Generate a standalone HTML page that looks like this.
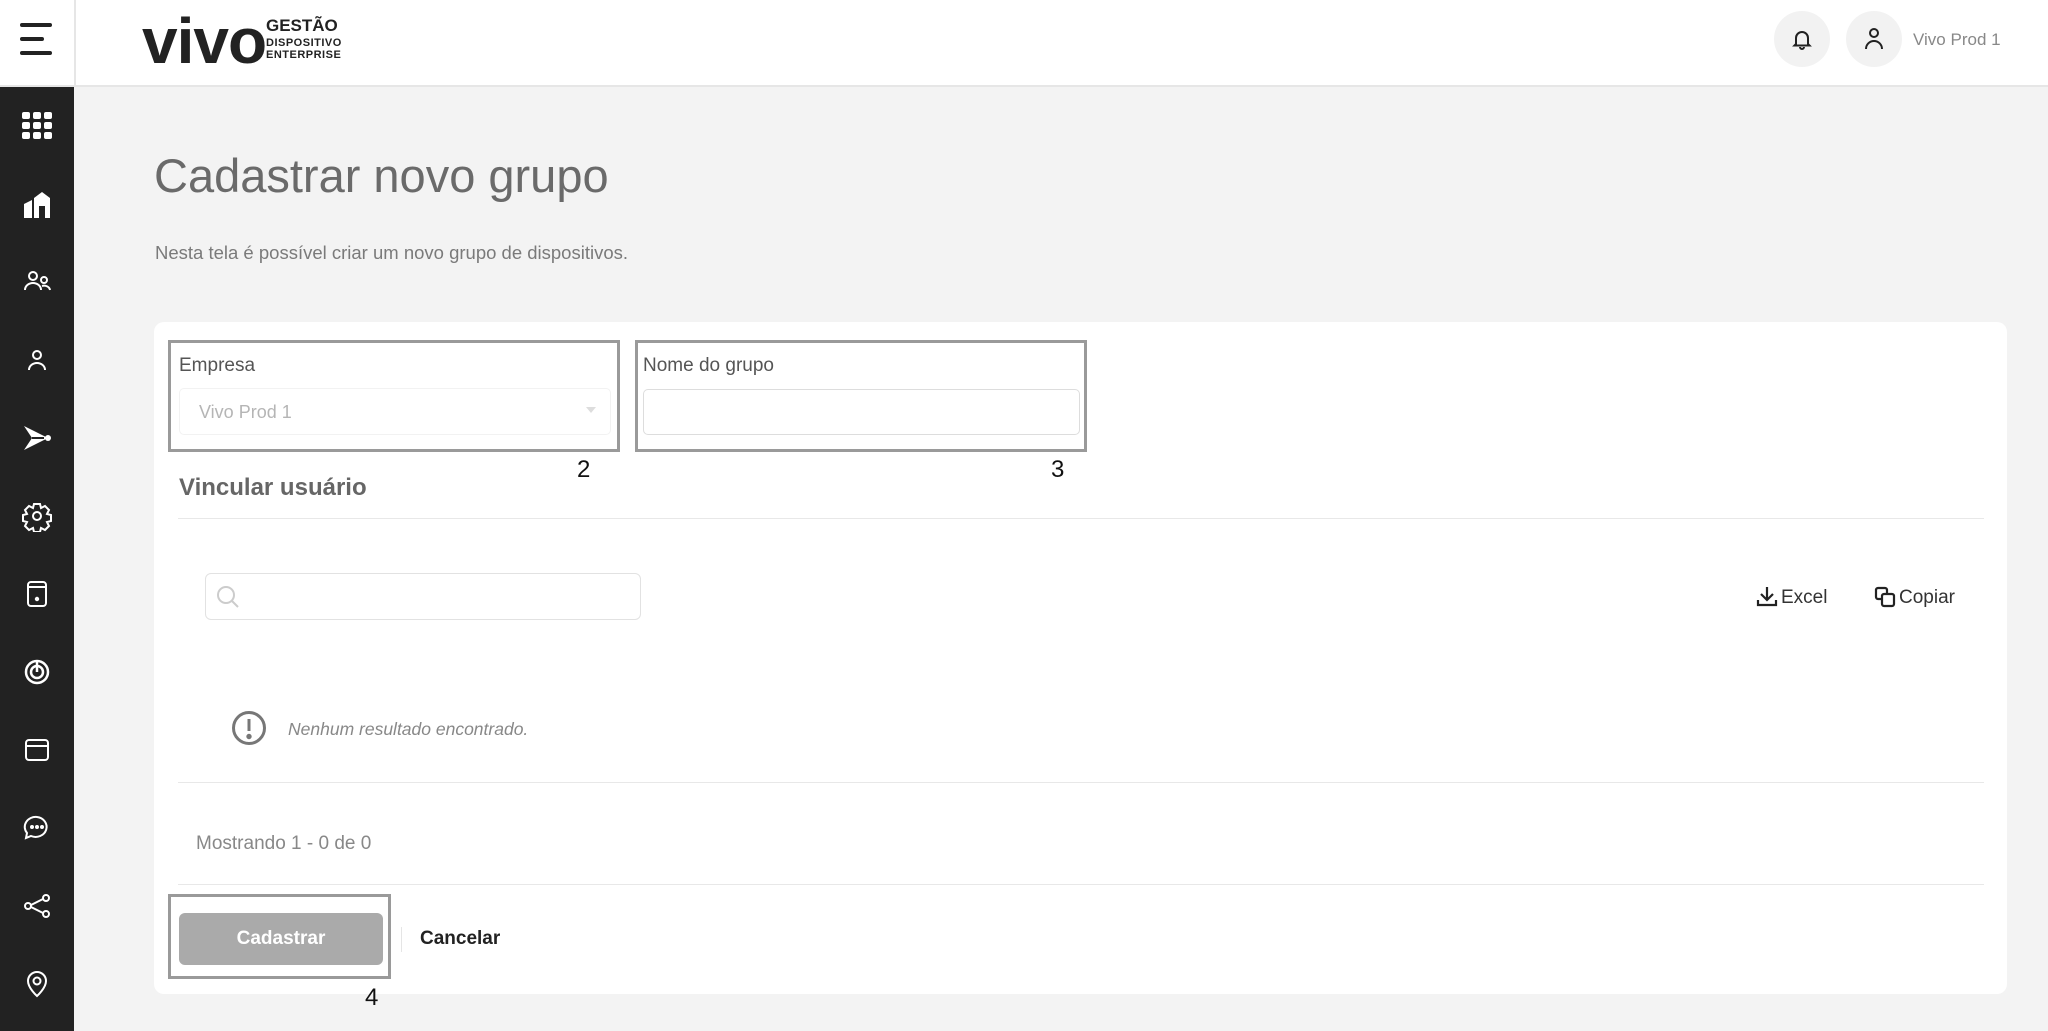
<!DOCTYPE html>
<html><head><meta charset="utf-8"><style>
*{margin:0;padding:0;box-sizing:border-box}
body{width:2048px;height:1031px;background:#f3f3f3;font-family:"Liberation Sans",sans-serif;position:relative;overflow:hidden;color:#444}
.a{position:absolute}
.hdr{left:0;top:0;width:2048px;height:87px;background:#fff;border-bottom:2px solid #e6e6e6}
.side{left:0;top:87px;width:74px;height:944px;background:#222}
.ic{position:absolute;left:21px;width:32px;height:32px}
.card{left:154px;top:322px;width:1853px;height:672px;background:#fff;border-radius:10px}
.box{border:3px solid #9a9a9a}
.line{height:1px;background:#e8e8e8;left:178px;width:1806px}
</style></head><body>
<div class="a hdr"></div>
<div class="a" style="left:74px;top:0;width:2px;height:87px;background:#e6e6e6"></div>
<div class="a" style="left:20px;top:23px;width:32px;height:4px;background:#222;border-radius:2px"></div>
<div class="a" style="left:20px;top:37px;width:24px;height:4px;background:#222;border-radius:2px"></div>
<div class="a" style="left:20px;top:51px;width:32px;height:4px;background:#222;border-radius:2px"></div>
<div class="a" style="left:142px;top:4px;font-size:64px;font-weight:bold;color:#222;letter-spacing:-1px">vivo</div>
<div class="a" style="left:266px;top:18px;font-size:17px;font-weight:bold;color:#222;line-height:16px">GESTÃO</div>
<div class="a" style="left:266px;top:37px;font-size:11px;font-weight:bold;color:#222;line-height:12px;letter-spacing:.5px">DISPOSITIVO<br>ENTERPRISE</div>
<div class="a" style="left:1774px;top:11px;width:56px;height:56px;border-radius:50%;background:#f2f2f2"></div>
<svg class="a" style="left:1790px;top:27px" width="24" height="24" viewBox="0 0 24 24" fill="none" stroke="#222" stroke-width="2"><path d="M6 17V11a6 6 0 0 1 12 0v6l1.5 1.5h-15z M10 20a2 2 0 0 0 4 0"/></svg>
<div class="a" style="left:1846px;top:11px;width:56px;height:56px;border-radius:50%;background:#f2f2f2"></div>
<svg class="a" style="left:1862px;top:26px" width="24" height="26" viewBox="0 0 24 26" fill="none" stroke="#222" stroke-width="2"><circle cx="12" cy="7" r="4"/><path d="M4 23a8 8 0 0 1 16 0"/></svg>
<div class="a" style="left:1913px;top:30px;font-size:17px;color:#888">Vivo Prod 1</div>

<div class="a side"></div>
<svg class="a" style="left:21px;top:111px" width="32" height="30" viewBox="0 0 32 30" fill="#fff"><rect x="1" y="1" width="8" height="7" rx="2"/><rect x="12" y="1" width="8" height="7" rx="2"/><rect x="23" y="1" width="8" height="7" rx="2"/><rect x="1" y="11" width="8" height="7" rx="2"/><rect x="12" y="11" width="8" height="7" rx="2"/><rect x="23" y="11" width="8" height="7" rx="2"/><rect x="1" y="21" width="8" height="7" rx="2"/><rect x="12" y="21" width="8" height="7" rx="2"/><rect x="23" y="21" width="8" height="7" rx="2"/></svg>
<svg class="ic" style="top:188px" viewBox="0 0 32 32" fill="#fff"><path d="M3 30V16l8-4v18z M13 30V10l8-6 8 6v20h-5V18h-6v12z"/></svg>
<svg class="ic" style="top:266px" viewBox="0 0 32 32" fill="none" stroke="#fff" stroke-width="2"><circle cx="12" cy="10" r="4"/><path d="M4 24a8 7 0 0 1 16 0"/><circle cx="23" cy="14" r="3"/><path d="M21 20a6 5 0 0 1 8 4"/></svg>
<svg class="ic" style="top:344px" viewBox="0 0 32 32" fill="none" stroke="#fff" stroke-width="2"><circle cx="16" cy="11" r="4"/><path d="M8 26a8 7 0 0 1 16 0"/></svg>
<svg class="ic" style="top:422px" viewBox="0 0 32 32" fill="#fff"><path d="M3 4l24 12L3 28l8-12z" /><path d="M11 16h12" stroke="#222" stroke-width="2"/><circle cx="27" cy="16" r="3"/></svg>
<svg class="ic" style="top:500px" viewBox="0 0 32 32" fill="none" stroke="#fff" stroke-width="2"><path d="M13 4h6l1 4 4-2 4 4-2 4 4 1v6l-4 1 2 4-4 4-4-2-1 4h-6l-1-4-4 2-4-4 2-4-4-1v-6l4-1-2-4 4-4 4 2z"/><circle cx="16" cy="16" r="4"/></svg>
<svg class="ic" style="top:578px" viewBox="0 0 32 32" fill="none" stroke="#fff" stroke-width="2"><rect x="7" y="4" width="18" height="24" rx="3"/><path d="M7 9h18"/><circle cx="16" cy="21" r="1.2" fill="#fff"/></svg>
<svg class="ic" style="top:656px" viewBox="0 0 32 32" fill="none" stroke="#fff" stroke-width="2.5"><circle cx="16" cy="16" r="11"/><circle cx="16" cy="16" r="6"/><path d="M16 5v11"/></svg>
<svg class="ic" style="top:734px" viewBox="0 0 32 32" fill="none" stroke="#fff" stroke-width="2"><rect x="5" y="6" width="22" height="20" rx="3"/><path d="M5 12h22"/></svg>
<svg class="ic" style="top:812px" viewBox="0 0 32 32" fill="none" stroke="#fff" stroke-width="2"><path d="M16 5a11 10 0 1 1-6 19l-5 2 1-5a11 10 0 0 1 10-16z"/><circle cx="11" cy="15" r="1" fill="#fff"/><circle cx="16" cy="15" r="1" fill="#fff"/><circle cx="21" cy="15" r="1" fill="#fff"/></svg>
<svg class="ic" style="top:890px" viewBox="0 0 32 32" fill="none" stroke="#fff" stroke-width="2"><circle cx="7" cy="16" r="3"/><circle cx="25" cy="8" r="3"/><circle cx="25" cy="24" r="3"/><path d="M10 15l12-6M10 17l12 6"/></svg>
<svg class="ic" style="top:968px" viewBox="0 0 32 32" fill="none" stroke="#fff" stroke-width="2"><path d="M16 28s-9-8-9-15a9 9 0 0 1 18 0c0 7-9 15-9 15z"/><circle cx="16" cy="13" r="3.5"/></svg>

<div class="a" style="left:154px;top:148px;font-size:47px;color:#6a6a6a;font-weight:300">Cadastrar novo grupo</div>
<div class="a" style="left:155px;top:242px;font-size:18.5px;color:#7a7a7a">Nesta tela é possível criar um novo grupo de dispositivos.</div>

<div class="a card"></div>
<div class="a box" style="left:168px;top:340px;width:452px;height:112px"></div>
<div class="a" style="left:179px;top:355px;font-size:19px;color:#555">Empresa</div>
<div class="a" style="left:179px;top:388px;width:432px;height:47px;border:1px solid #f2f2f2;border-radius:5px"></div>
<div class="a" style="left:199px;top:402px;font-size:18px;color:#b5b5b5">Vivo Prod 1</div>
<div class="a" style="left:586px;top:407px;width:0;height:0;border-left:5px solid transparent;border-right:5px solid transparent;border-top:6px solid #ddd"></div>
<div class="a box" style="left:635px;top:340px;width:452px;height:112px"></div>
<div class="a" style="left:643px;top:355px;font-size:19px;color:#555">Nome do grupo</div>
<div class="a" style="left:643px;top:389px;width:437px;height:46px;border:1px solid #ddd;border-radius:5px"></div>
<div class="a" style="left:577px;top:456px;font-size:24px;color:#111">2</div>
<div class="a" style="left:1051px;top:456px;font-size:24px;color:#111">3</div>
<div class="a" style="left:179px;top:474px;font-size:24px;font-weight:bold;color:#666">Vincular usuário</div>
<div class="a line" style="top:518px"></div>

<div class="a" style="left:205px;top:573px;width:436px;height:47px;border:1px solid #e2e2e2;border-radius:6px"></div>
<svg class="a" style="left:216px;top:585px" width="24" height="24" viewBox="0 0 24 24" fill="none" stroke="#ccc" stroke-width="2"><circle cx="10" cy="10" r="8"/><path d="M16 16l6 6"/></svg>
<svg class="a" style="left:1756px;top:585px" width="22" height="22" viewBox="0 0 22 22" fill="none" stroke="#222" stroke-width="2.2"><path d="M11 2v13M5 9l6 6 6-6M2 15v5h18v-5"/></svg>
<div class="a" style="left:1781px;top:587px;font-size:19px;color:#333">Excel</div>
<svg class="a" style="left:1874px;top:586px" width="22" height="22" viewBox="0 0 22 22" fill="none" stroke="#222" stroke-width="2.2"><rect x="2" y="2" width="11" height="11" rx="2"/><rect x="8" y="8" width="12" height="12" rx="2" fill="#fff"/></svg>
<div class="a" style="left:1899px;top:587px;font-size:19px;color:#333">Copiar</div>

<svg class="a" style="left:231px;top:710px" width="36" height="36" viewBox="0 0 36 36" fill="none" stroke="#777" stroke-width="3"><circle cx="18" cy="18" r="15.5"/><path d="M18 9v12"/><circle cx="18" cy="26.5" r="1.2" fill="#777"/></svg>
<div class="a" style="left:288px;top:719px;font-size:17.5px;font-style:italic;color:#888">Nenhum resultado encontrado.</div>
<div class="a line" style="top:782px"></div>
<div class="a" style="left:196px;top:833px;font-size:19px;color:#888">Mostrando 1 - 0 de 0</div>
<div class="a line" style="top:884px"></div>

<div class="a box" style="left:168px;top:894px;width:223px;height:85px"></div>
<div class="a" style="left:179px;top:913px;width:204px;height:52px;background:#aaa;border-radius:6px;color:#fff;font-weight:bold;font-size:19px;text-align:center;line-height:52px">Cadastrar</div>
<div class="a" style="left:401px;top:927px;width:1px;height:25px;background:#e5e5e5"></div>
<div class="a" style="left:420px;top:928px;font-size:19px;font-weight:bold;color:#222">Cancelar</div>
<div class="a" style="left:365px;top:984px;font-size:24px;color:#111">4</div>
</body></html>
